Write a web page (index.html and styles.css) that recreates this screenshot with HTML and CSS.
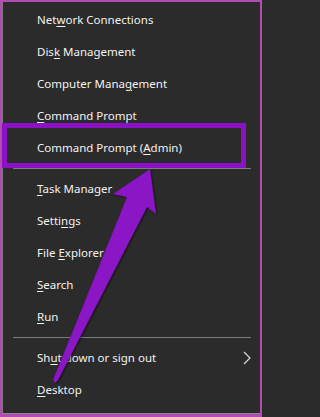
FILE: index.html
```html
<!DOCTYPE html>
<html>
<head>
<meta charset="utf-8">
<link rel="stylesheet" href="styles.css">
</head>
<body>
<div class="frame">
  <div class="menu">
    <div class="item">Net<u>w</u>ork Connections</div>
    <div class="item">Dis<u>k</u> Management</div>
    <div class="item">Computer Mana<u>g</u>ement</div>
    <div class="item"><u>C</u>ommand Prompt</div>
    <div class="item">Command Prompt (<u>A</u>dmin)</div>
    <div class="sep"></div>
    <div class="item"><u>T</u>ask Manager</div>
    <div class="item">Setti<u>n</u>gs</div>
    <div class="item">File <u>E</u>xplorer</div>
    <div class="item"><u>S</u>earch</div>
    <div class="item"><u>R</u>un</div>
    <div class="sep"></div>
    <div class="item sub">Sh<u>u</u>t down or sign out<svg class="chev" width="8" height="14" viewBox="0 0 8 14"><path d="M1 1 L7 7 L1 13" fill="none" stroke="#d8d8d8" stroke-width="1.2"/></svg></div>
    <div class="item"><u>D</u>esktop</div>
  </div>
  <div class="highlight"></div>
  <svg class="arrow" width="262" height="417" viewBox="0 0 262 417">
    <defs>
      <filter id="sh" x="-20%" y="-20%" width="140%" height="140%">
        <feDropShadow dx="1" dy="1" stdDeviation="1" flood-color="#000" flood-opacity="0.6"/>
      </filter>
    </defs>
    <polygon filter="url(#sh)" fill="#8a12c6" points="150,169 156,214 147,207 58,380 55,383 53,380 127,197 113,194"/>
  </svg>
</div>
</body>
</html>
```
FILE: styles.css
```css
html, body {
  margin: 0;
  padding: 0;
  background: #2b2b2b;
}
.frame {
  position: relative;
  width: 262px;
  height: 417px;
  box-sizing: border-box;
  border: 2px solid #b04cb2;
  border-bottom-width: 3px;
  background: #2b2b2b;
}
.menu {
  box-sizing: border-box;
  height: 100%;
  padding-top: 2px;
  border-left: 1px solid #7d7d7d;
  border-bottom: 1px solid #8a8a8a;
  font-family: "Noto Sans", "Open Sans", sans-serif;
  font-size: 11.5px;
  color: #f2f2f2;
}
.item {
  display: block;
  height: 32px;
  line-height: 32px;
  padding-left: 34px;
  white-space: nowrap;
}
.item u {
  text-underline-offset: 2px;
}
.sub {
  position: relative;
}
.chev {
  position: absolute;
  left: 240px;
  top: 9px;
}
.sep {
  height: 9px;
  display: flex;
  align-items: center;
  padding-left: 10px;
  padding-right: 9px;
}
.sep::before {
  content: "";
  flex: 1;
  height: 1px;
  background: #7c7c7c;
}
.highlight {
  position: absolute;
  left: 0;
  top: 121px;
  width: 244px;
  height: 45px;
  box-sizing: border-box;
  border: 5px solid #8b12c4;
}
.arrow {
  position: absolute;
  left: -2px;
  top: -2px;
}
```
